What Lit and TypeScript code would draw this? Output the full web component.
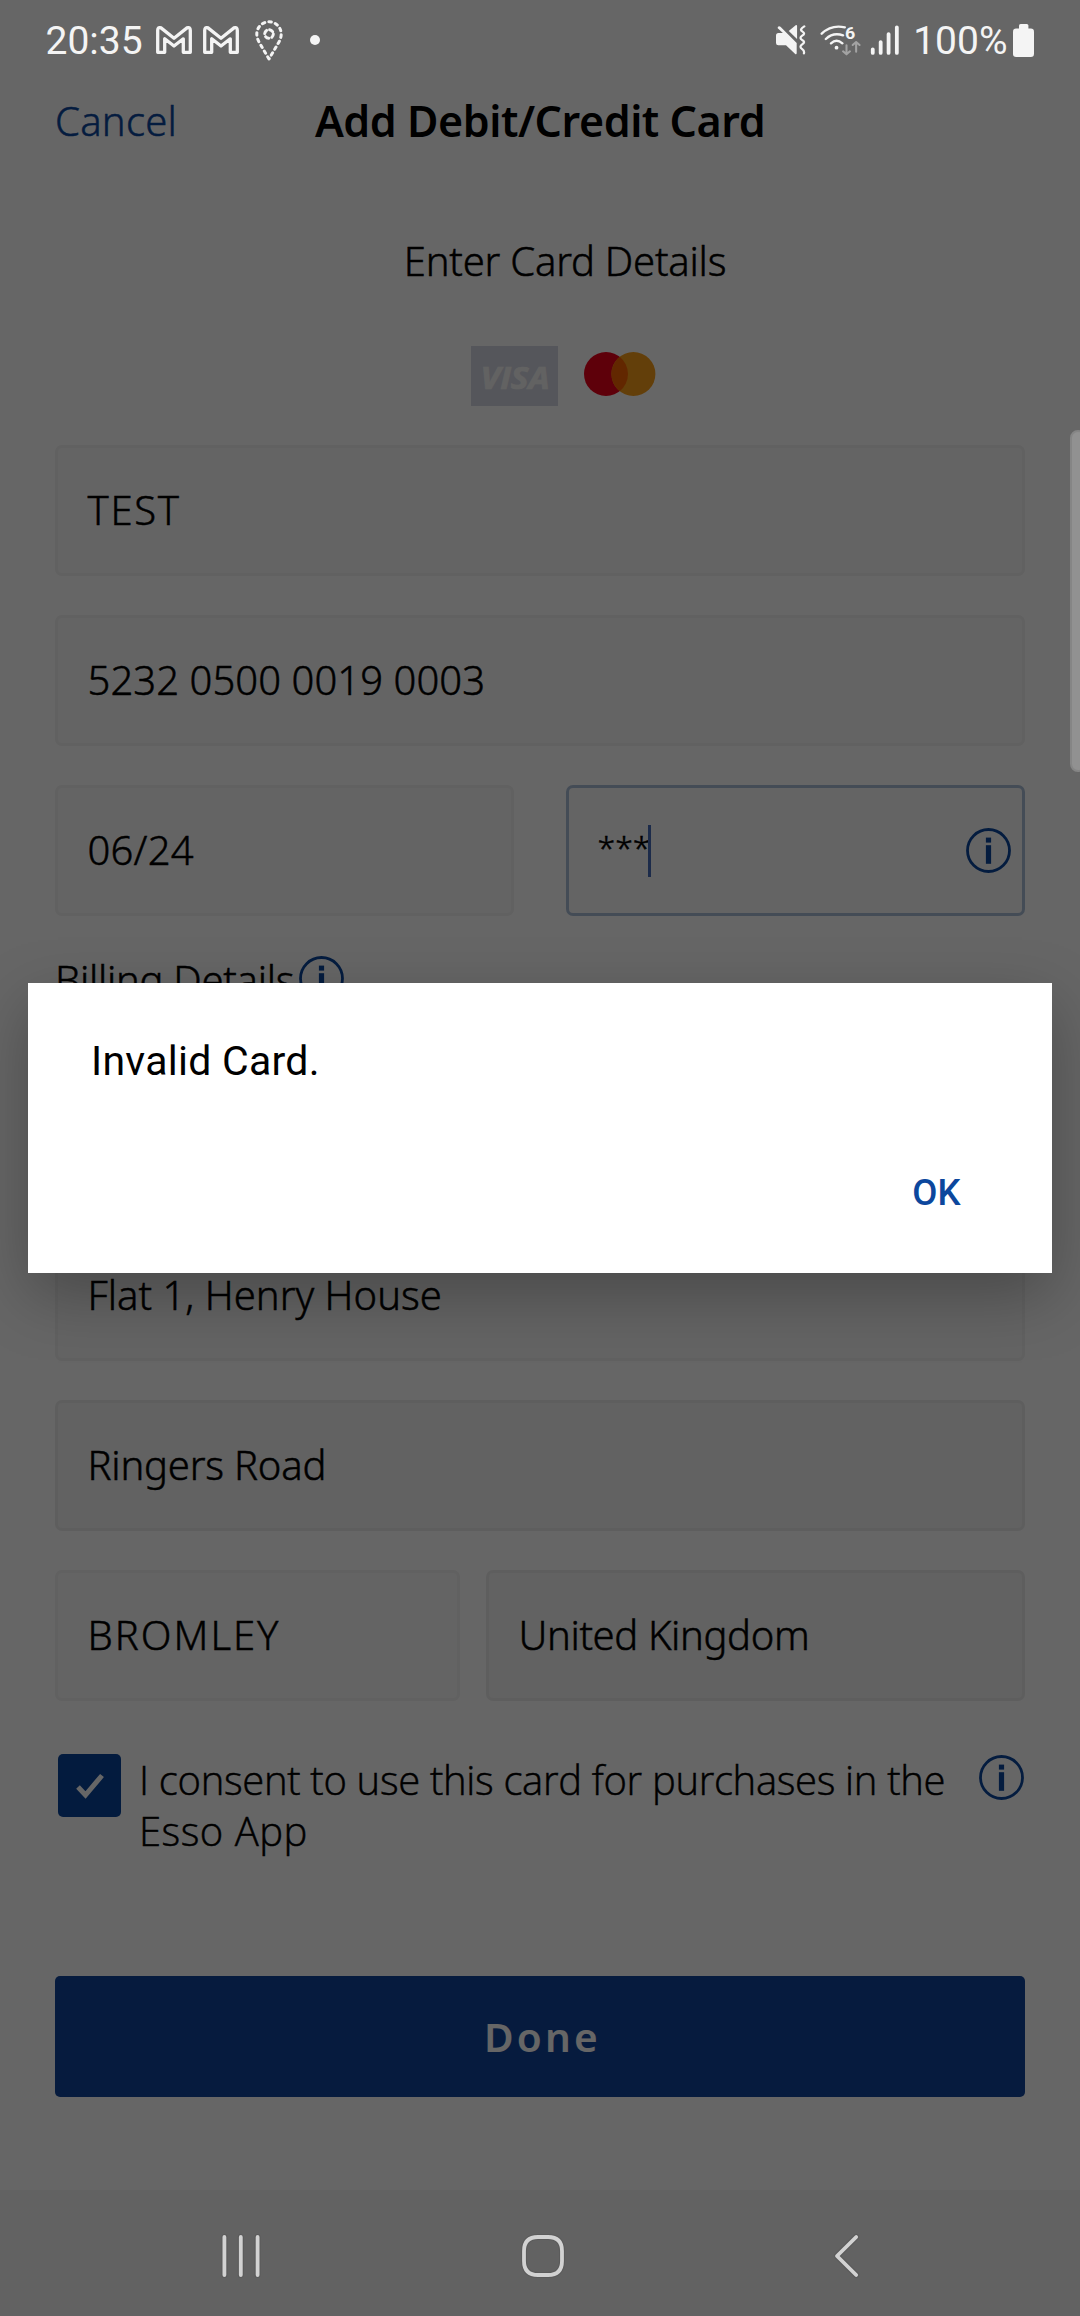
import { LitElement, html, css, nothing } from "lit";
import { customElement, property } from "lit/decorators.js";
import { classMap } from "lit/directives/class-map.js";

@customElement("info-icon")
class InfoIcon extends LitElement {
  static styles = css`
    :host { display: block; width: 45px; height: 45px; flex: none; }
    svg { display: block; width: 45px; height: 45px; }
    .ring { fill: none; stroke: #0c479d; stroke-width: 2.8; }
    .mark { fill: #0c479d; }
  `;
  render() {
    return html`<svg viewBox="0 0 45 45">
      <circle class="ring" cx="22.5" cy="22.5" r="21"></circle>
      <rect class="mark" x="19.9" y="9.6" width="5.2" height="5"></rect>
      <rect class="mark" x="19.9" y="17.2" width="5.2" height="18.6"></rect>
    </svg>`;
  }
}

@customElement("form-field")
class FormField extends LitElement {
  @property() value = "";
  @property() kind = "";

  static styles = css`
    :host { display: block; min-width: 0; }
    .box {
      display: flex; align-items: center; box-sizing: border-box; height: 131px;
      border: 3px solid #f2f2f2; border-radius: 7px; background: #fafafa;
      padding: 0 11px 1px 29.5px;
      font: 300 40px/56px "Noto Sans", sans-serif; color: #000;
      -webkit-text-stroke: 0.5px #000; white-space: nowrap;
    }
    .box.locked { background: #f4f4f4; border-color: #ececec; }
    .box.focused { border-color: #aabed6; padding-bottom: 0; padding-left: 28.5px; }
    .secret { font-size: 32px; margin-bottom: 8px; }
    .caret { width: 3px; height: 52px; background: #466bb8; margin-left: -2px; }
    .fill { flex: 1; }
    .caps { letter-spacing: 2px; }
    .name { letter-spacing: 1.7px; }
    .number { letter-spacing: 0.05px; }
    .date { letter-spacing: 0.2px; }
    .country { letter-spacing: -0.38px; }
    .street { letter-spacing: -0.2px; }
  `;
  render() {
    const focused = this.kind === "focused";
    const locked = this.hasAttribute("locked");
    return html`<div class=${classMap({ box: true, focused, locked })}>
      ${focused
        ? html`<span class="secret">${this.value}</span><span class="caret"></span><span class="fill"></span><info-icon></info-icon>`
        : this.value
          ? html`<span class=${this.kind}>${this.value}</span>`
          : nothing}
    </div>`;
  }
}

@customElement("status-bar")
class StatusBar extends LitElement {
  static styles = css`
    :host { display: flex; align-items: center; box-sizing: border-box; height: 80px; padding: 0 46px 0 45.5px;
      font: 400 39px/46px Roboto, sans-serif; color: #f4f4f4; }
    .side { display: flex; align-items: center; }
    .right { margin-left: auto; }
    .label { margin-top: 1px; }
    svg { display: block; flex: none; }
    .line { fill: none; stroke: #f4f4f4; stroke-linecap: round; stroke-linejoin: round; }
    .solid { fill: #f4f4f4; }
    .dim { fill: none; stroke: #a3a3a3; stroke-width: 6; stroke-linecap: round; stroke-linejoin: round; }
    .mail { width: 36px; height: 28px; margin-left: 13.5px; }
    .mail + .mail { margin-left: 11px; }
    .pin { width: 28px; height: 41px; margin: 0 0 0 15.5px; }
    .dot { width: 10.4px; height: 10.4px; border-radius: 50%; background: #f4f4f4; margin-left: 27px; }
    .mute { width: 30px; height: 29.7px; margin-right: 14px; }
    .wifi { width: 41.3px; height: 32px; margin-right: 8px; }
    .six { font: 700 52px Roboto, sans-serif; fill: #f4f4f4; }
    .signal { width: 29.6px; height: 30.7px; margin-right: 14px; }
    .battery { width: 21px; height: 33px; margin-left: 5.5px; }
  `;
  private mail() {
    return html`<svg class="mail" viewBox="0 0 36 28">
      <path class="line" stroke-width="3.3" d="M1.7 26.3V4.2Q1.8 0.8 5 1.9L18 12.2L31 1.9Q34.2 0.8 34.3 4.2V26.3H27.3V12.8L18 20L8.7 12.8V26.3Z"></path>
    </svg>`;
  }
  render() {
    return html`
      <div class="side">
        <span class="label">20:35</span>
        ${this.mail()}${this.mail()}
        <svg class="pin" viewBox="0 0 28 41">
          <path class="line" stroke-width="3" stroke-dasharray="2.6 4.1" d="M14 39L4.3 22.5Q1.8 18 1.8 14A12.2 12.2 0 0 1 26.2 14Q26.2 18 23.7 22.5Z"></path>
          <circle class="line" stroke-width="3" stroke-dasharray="3.6 3.2" cx="14" cy="14" r="4.3"></circle>
        </svg>
        <span class="dot"></span>
      </div>
      <div class="side right">
        <svg class="mute" viewBox="685 77 87 89" preserveAspectRatio="none">
          <path class="solid" d="M690 84Q693 78 698 82L745 131V162Q744 167 740 163L714 138H692Q685 138 685 131V109Q685 101 692 101H705L690 87Z"></path>
          <path class="solid" d="M722 95L742 78Q746 76 746 80V119Z"></path>
          <path class="line" stroke-width="6.5" d="M767 81Q752 91 761 96Q772 102 761 109Q751 116 761 122Q772 128 761 135Q751 142 761 149Q768 154 766 162"></path>
        </svg>
        <svg class="wifi" viewBox="812 74 120 96" preserveAspectRatio="none">
          <path class="line" stroke-width="7" d="M817 103Q845 75 884 84M829 119Q850 98 879 108M844 132Q860 117 877 132"></path>
          <circle class="solid" cx="860" cy="145" r="5.5"></circle>
          <text class="six" x="885" y="118">6</text>
          <path class="dim" d="M889 138V164M879 156L889 165L899 156M917 157V130M907 137L917 128L927 137"></path>
        </svg>
        <svg class="signal" viewBox="956 76 86 92" preserveAspectRatio="none">
          <path class="line" stroke-width="11" d="M964 149V160M987 127V160M1010 103V160M1034 83V160"></path>
        </svg>
        <span class="label">100%</span>
        <svg class="battery" viewBox="0 0 21 33">
          <rect class="solid" x="6" y="0" width="9.4" height="8" rx="1.6"></rect>
          <rect class="solid" x="0" y="4.5" width="21" height="28.5" rx="3.2"></rect>
        </svg>
      </div>`;
  }
}

@customElement("nav-bar")
class NavBar extends LitElement {
  static styles = css`
    :host { display: flex; height: 126px; align-items: center; box-sizing: border-box; padding: 6px 217px 0 219px; justify-content: space-between; }
    svg { display: block; width: 44px; height: 48px; overflow: visible; }
    .halo { fill: none; stroke: #5b5b5b; stroke-width: 6; stroke-linecap: round; stroke-linejoin: round; }
    .line { fill: none; stroke: #d2d2d2; stroke-width: 3.8; stroke-linecap: round; stroke-linejoin: round; }
  `;
  private glyph(d: string) {
    return html`<svg viewBox="0 0 44 48"><path class="halo" d=${d}></path><path class="line" d=${d}></path></svg>`;
  }
  render() {
    return html`
      ${this.glyph("M5.4 5V43M21.8 5V43M38.6 5V43")}
      ${this.glyph("M19 5H29Q43 5 43 19V29Q43 43 29 43H19Q5 43 5 29V19Q5 5 19 5Z")}
      ${this.glyph("M37.2 5L18 24L37.2 43")}`;
  }
}

@customElement("app-root")
class AppRoot extends LitElement {
  static styles = css`
    :host { display: block; }
    .stage { position: relative; width: 1080px; height: 2316px; overflow: hidden; display: flex; flex-direction: column; background: #fff;
      font: 300 40px/56px "Noto Sans", sans-serif; color: #000; }
    .page { flex: 1; display: flex; flex-direction: column; -webkit-text-stroke: 0.5px currentColor; }
    .over { position: relative; z-index: 2; }
    .foot { background: #f5f5f5; }
    .head { display: grid; grid-template-columns: 1fr auto 1fr; padding: 13px 55px 0; height: 56px; }
    .cancel { color: #0c479d; letter-spacing: 0.25px; }
    .title { font-weight: 600; font-size: 43px; letter-spacing: -0.45px; white-space: nowrap; -webkit-text-stroke: 0; }
    .sub { margin-top: 84px; padding-left: 50px; text-align: center; letter-spacing: -0.22px; }
    .brands { display: flex; justify-content: center; align-items: center; gap: 26px; height: 60px; margin-top: 57px; padding-left: 47px; }
    .visa { width: 87px; height: 60px; display: block; }
    .visa-bg { fill: #d5d7e3; }
    .visa-name { font: italic 700 30px "Open Sans", sans-serif; fill: #f6f6f6; stroke: #f6f6f6; stroke-width: 0.7; }
    .mc { width: 72px; height: 44px; display: block; margin-bottom: 4px; }
    .form { display: flex; flex-direction: column; gap: 39px; padding: 39px 55px 0; }
    .pair { display: grid; grid-template-columns: 459px 459px; gap: 52px; }
    .place { display: grid; grid-template-columns: 405px 539px; gap: 26px; }
    .billing { display: flex; align-items: center; gap: 5px; height: 56px; margin: -3px 0 13px; letter-spacing: -0.3px; }
    .billing info-icon { margin-bottom: 3px; }
    .consent { display: flex; align-items: flex-start; padding: 53px 56px 0 58px; }
    .check { width: 63px; height: 63px; display: block; flex: none; }
    .agree { flex: 1; margin: 0 0 0 18px; font-family: "Open Sans", sans-serif; line-height: 51px; letter-spacing: -0.32px; white-space: nowrap; height: 102px; }
    .last { letter-spacing: 0.5px; }
    .consent info-icon { margin-top: 1px; }
    .done { margin: 120px 55px 0; height: 121px; box-sizing: border-box; border: 0; border-radius: 5px; background: #0f449b; color: #fff; display: flex; align-items: center; justify-content: center;
      font: 600 40.5px/56px "Noto Sans", sans-serif; letter-spacing: 3.2px; padding: 0 0 0 5px; -webkit-text-stroke: 0; }
    .scrim { position: absolute; inset: 0; background: rgba(0, 0, 0, 0.6); z-index: 1; }
    .handle { position: absolute; z-index: 2; right: -6px; top: 430px; width: 16px; height: 342px; box-sizing: border-box; border: 2px solid #858585; border-radius: 9px; background: #919191; }
    .dialog { position: absolute; z-index: 3; left: 28px; top: 983px; width: 1024px; height: 290px; box-sizing: border-box; background: #fff;
      box-shadow: 0 22px 60px rgba(0, 0, 0, 0.27); display: flex; flex-direction: column; justify-content: space-between; padding: 53px 88px 53px 63px;
      font-family: Roboto, sans-serif; }
    .message { font: 400 41px/50px Roboto, sans-serif; letter-spacing: 0.27px; }
    .ok { align-self: flex-end; font: 500 36.5px/54px Roboto, sans-serif; color: #0c479d; margin-right: 3.5px; }
  `;
  render() {
    return html`<div class="stage">
      <status-bar class="over"></status-bar>
      <div class="page">
        <div class="head"><span class="cancel">Cancel</span><span class="title">Add Debit/Credit Card</span></div>
        <div class="sub">Enter Card Details</div>
        <div class="brands">
          <svg class="visa" viewBox="0 0 87 60">
            <rect class="visa-bg" width="87" height="60"></rect>
            <text class="visa-name" x="9.5" y="43" textLength="69" lengthAdjust="spacingAndGlyphs">VISA</text>
          </svg>
          <svg class="mc" viewBox="0 0 72 44">
            <circle cx="22" cy="22" r="22" fill="#eb001b"></circle>
            <circle cx="49.4" cy="22" r="22" fill="#f79e1b"></circle>
            <path d="M35.7 4.8A22 22 0 0 1 35.7 39.2A22 22 0 0 1 35.7 4.8Z" fill="#f46300"></path>
          </svg>
        </div>
        <div class="form">
          <form-field kind="name" value="TEST"></form-field>
          <form-field kind="number" value="5232 0500 0019 0003"></form-field>
          <div class="pair">
            <form-field kind="date" value="06/24"></form-field>
            <form-field kind="focused" value="***"></form-field>
          </div>
          <div class="billing"><span>Billing Details</span><info-icon></info-icon></div>
          <form-field></form-field>
          <form-field value="Flat 1, Henry House"></form-field>
          <form-field locked kind="street" value="Ringers Road"></form-field>
          <div class="place">
            <form-field kind="caps" value="BROMLEY"></form-field>
            <form-field locked kind="country" value="United Kingdom"></form-field>
          </div>
        </div>
        <div class="consent">
          <svg class="check" viewBox="0 0 63 63">
            <rect width="63" height="63" rx="5" fill="#08459b"></rect>
            <path d="M20 33L27.5 41L44 21.5" fill="none" stroke="#fff" stroke-width="5"></path>
          </svg>
          <div class="agree">I consent to use this card for purchases in the<br><span class="last">Esso App</span></div>
          <info-icon></info-icon>
        </div>
        <button class="done">Done</button>
      </div>
      <div class="foot"><nav-bar class="over"></nav-bar></div>
      <div class="scrim"></div>
      <div class="handle"></div>
      <div class="dialog"><div class="message">Invalid Card.</div><div class="ok">OK</div></div>
    </div>`;
  }
}
